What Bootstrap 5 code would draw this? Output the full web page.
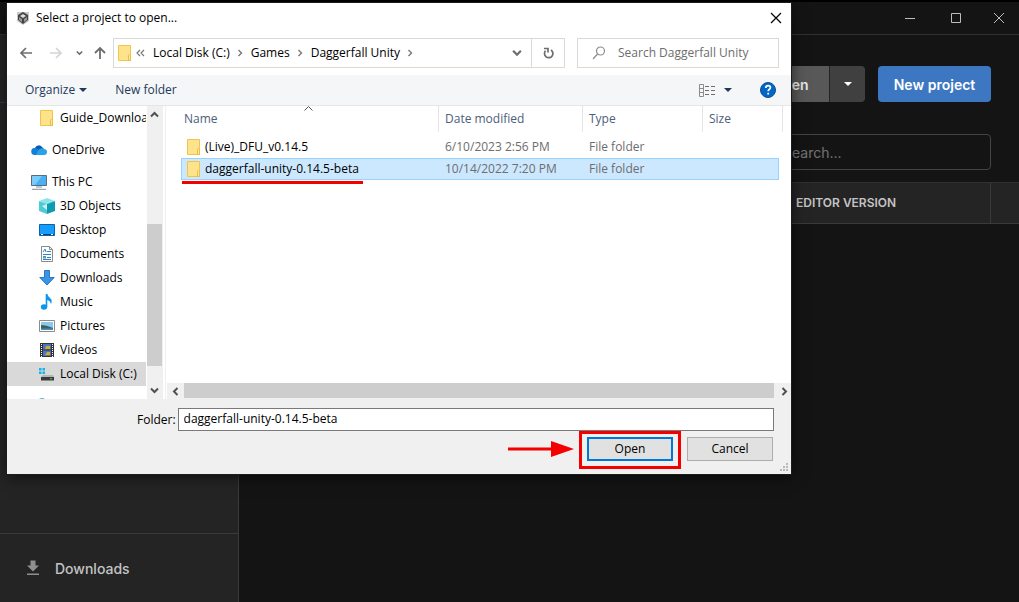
<!DOCTYPE html>
<html lang="en" data-bs-theme="light">
<head>
<meta charset="utf-8">
<meta name="viewport" content="width=device-width, initial-scale=1">
<title>Select a project to open...</title>
<link href="https://cdn.jsdelivr.net/npm/bootstrap@5.3.0/dist/css/bootstrap.min.css" rel="stylesheet">
<script src="https://cdn.jsdelivr.net/npm/bootstrap@5.3.0/dist/js/bootstrap.bundle.min.js"></script>
<style>
  body { background: #141414; font-family: Inter, sans-serif; overflow: hidden; }
  button { color: inherit; }
  svg { display: block; flex: none; }
  .ico-btn { border: 0; background: none; padding: 0; display: flex; align-items: center; justify-content: center; }

  /* Hub window behind the dialog */
  .hub { border-top: 2px solid #000; color: #c4c4c4; }
  .hub-title { height: 33px; border-bottom: 1px solid #303030; padding-left: 46px; }
  .hub-title .ico-btn { width: 46px; color: #bdbdbd; }
  .hub-title .ico-btn:last-child { width: 40px; }
  .hub-side { width: 239px; background: #242424; border-right: 1px solid #3a3a3a; }
  .hub-account { height: 68px; border-bottom: 1px solid #3a3a3a; }
  .hub-downloads { height: 69px; border-top: 1px solid #3a3a3a; padding-left: 25px; color: #c4c4c4; font-size: 14px; font-weight: 500; gap: 14px; }
  .hub-bar { padding: 31px 28px 0 28px; gap: 13px; }
  .hub-btn { height: 36px; font-size: 14px; font-weight: 600; border: 0; border-radius: 4px; padding: 0; color: #fff; }
  .hub-open { width: 77px; background: #585858; color: #e6e6e6; }
  .hub-more { width: 36px; background: #404040; display: flex; align-items: center; justify-content: center; }
  .hub-new { width: 113px; background: #3d77c2; }
  .hub-find { width: 240px; height: 36px; background: #141414; border: 1px solid #444; border-radius: 4px; color: #ccc; font-size: 14px; padding: 0 12px 0 31px; margin: 32px 28px 12px auto; font-family: Inter, sans-serif; }
  .hub-find::placeholder { color: #757575; opacity: 1; }
  .hub-head { height: 42px; background: #242424; border-top: 1px solid #303030; border-bottom: 1px solid #3a3a3a; font-size: 12px; font-weight: 600; }
  .hub-head .ver { width: 207px; padding-left: 12px; border-right: 1px solid #3a3a3a; }
  .hub-head .tail { width: 28px; }

  /* File dialog */
  .dlg { position: absolute; left: 7px; right: 228px; top: 3px; background: #fff; color: #000; font: 12px/16px "Open Sans", sans-serif; box-shadow: 0 0 0 1px #1c1c1c, 0 3px 14px rgba(0,0,0,.6); }
  .dlg-title { height: 30px; padding: 0 9px; gap: 6px; }
  .dlg-nav { padding: 5px 12px 7px 12px; }
  .dlg-nav .ico-btn { color: #6d6d6d; }
  .recent { margin: 0 11px 0 13px; }
  .addr { height: 30px; border: 1px solid #d9d9d9; margin-left: 7px; }
  .addr .reload { width: 33px; border-left: 1px solid #d9d9d9; }
  .addr .more { margin: 0 5px 0 6px; }
  .addr nav svg { margin: 0 8px 0 7px; }
  .find { width: 202px; height: 30px; border: 1px solid #d9d9d9; margin-left: 12px; padding: 0 12px 0 13px; gap: 11px; }
  .find input { border: 0; padding: 0; outline: 0; color: #6d6d6d; width: 100%; }
  .find input::placeholder { color: #6d6d6d; opacity: 1; }
  .crumb-link { color: #000; text-decoration: none; }
  .cmd { height: 31px; background: #f5f6f7; border-bottom: 1px solid #e5e6e7; color: #1e395b; padding: 0 15px 0 18px; }
  .cmd button { font-size: 12px; gap: 4px; }
  .pane { height: 293px; }
  .tree { width: 140px; overflow: hidden; }
  .tree a { height: 24px; color: #000; text-decoration: none; white-space: nowrap; display: flex; align-items: center; gap: 5px; padding-left: 24px; margin-right: 1px; overflow: hidden; }
  .tree a.sub { padding-left: 32px; }
  .tree a.root { margin-top: 8px; }
  .tree a.first-root { margin-bottom: 8px; }
  .tree a.on { background: #d9d9d9; }
  .sbar-v { width: 16px; background: #f0f0f0; }
  .sbar-v .ico-btn { height: 17px; width: 15px; color: #505050; }
  .sbar-v .thumb { height: 142px; width: 15px; background: #cdcdcd; }
  .files { border-left: 1px solid #f0f0f0; margin-left: 2px; }
  .sbar-h { height: 16px; background: #f0f0f0; margin-left: 1px; }
  .sbar-h .ico-btn { width: 17px; color: #505050; }
  .sbar-h .thumb { height: 15px; background: #cdcdcd; }
  .ftable { width: calc(100% - 27px); margin-left: 15px; table-layout: fixed; border-collapse: separate; border-spacing: 0; }
  .ftable th { height: 26px; font-weight: 400; color: #4c607a; border-right: 1px solid #e5e5e5; padding: 0 0 0 6px; position: relative; }
  .ftable th:first-child { padding-left: 3px; }
  .ftable th:last-child { border: 0; }
  .ftable th:last-child::after { content: ""; position: absolute; right: -4px; top: 0; bottom: 0; border-right: 1px solid #e5e5e5; }
  .ftable tbody td { height: 22px; padding: 0 0 0 6px; color: #6d6d6d; white-space: nowrap; }
  .ftable td:first-child { color: #000; }
  .ftable tr.gap td { height: 4px; }
  .ftable tr.on { background: #cce8ff; outline: 1px solid #99d1ff; outline-offset: -1px; }
  .fname { display: flex; gap: 4px; align-items: center; position: relative; }
  .sort { position: absolute; left: 123px; top: 0; }
  .underline { position: absolute; left: -5px; top: 20px; width: 181px; height: 3px; background: #f40000; }
  .foot { background: #f0f0f0; padding: 9px 17px 13px 130px; }
  .foot label { margin-right: 2px; }
  .foot input { height: 23px; border: 1px solid #7a7a7a; padding: 0 5px 2px; background: #fff; color: #000; outline: 0; }
  .foot .acts { gap: 14px; margin-top: 6px; padding-right: 1px; }
  .act { width: 86px; height: 24px; background: #e1e1e1; border: 1px solid #adadad; padding: 0; line-height: 20px; }
  .act.def { border: 2px solid #0078d7; }
  .hot { position: absolute; inset: -6px -8px -8px -8px; border: 3px solid #f40000; pointer-events: none; }
  .arrow { position: absolute; right: 99px; top: 3px; }
  .grip { position: absolute; right: 2px; bottom: 2px; }
</style>
</head>
<body>
<svg width="0" height="0" class="position-absolute" aria-hidden="true">
  <defs>
    <symbol id="folder" viewBox="0 0 16 16"><path d="M1.500.5h12v15h-12z" fill="#ffe38c" stroke="#efc648"/><path d="M11.500 10.500q0-1 1-1t1 1v5h-2z" fill="#ffe9a8" stroke="#e8bd3d"/></symbol>
    <symbol id="down" viewBox="0 0 9 7"><path d="M1 1.500l3.500 3.500L8 1.500" fill="none" stroke="currentColor" stroke-width="2"/></symbol>
    <symbol id="crumb" viewBox="0 0 5 8"><path d="M1 1l3 3-3 3" fill="none" stroke="#777" stroke-width="1.400"/></symbol>
    <symbol id="tri" viewBox="0 0 8 4"><path d="M0 0h8L4 4z" fill="currentColor"/></symbol>
  </defs>
</svg>

<div class="hub vh-100 d-flex flex-column">
  <header class="hub-title d-flex justify-content-end flex-shrink-0">
    <button class="ico-btn" aria-label="Minimize"><svg width="10" height="10"><path d="M0 5.500h10" stroke="currentColor"/></svg></button>
    <button class="ico-btn" aria-label="Maximize"><svg width="10" height="10"><path d="M.5.5h9v9h-9z" fill="none" stroke="currentColor"/></svg></button>
    <button class="ico-btn" aria-label="Close window"><svg width="10" height="10"><path d="M0 0l10 10M10 0L0 10" stroke="currentColor"/></svg></button>
  </header>
  <div class="d-flex flex-grow-1">
    <aside class="hub-side d-flex flex-column flex-shrink-0">
      <div class="hub-account"></div>
      <a href="#" class="hub-downloads mt-auto d-flex align-items-center text-decoration-none">
        <svg width="16" height="16" viewBox="0 0 16 16" fill="#8f8f8f"><path d="M5.500.5h5v5H14L8 11.500 2 5.500h3.500zM2 13.500h12v1.500H2z"/></svg>
        Downloads
      </a>
    </aside>
    <main class="flex-grow-1 d-flex flex-column">
      <div class="hub-bar d-flex justify-content-end">
        <div class="btn-group">
          <button class="hub-btn hub-open rounded-end-0">Open</button>
          <button class="hub-btn hub-more rounded-start-0 border-start border-dark" aria-label="More open options"><svg width="8" height="4"><use href="#tri"/></svg></button>
        </div>
        <button class="hub-btn hub-new">New project</button>
      </div>
      <input class="hub-find" type="text" placeholder="Search..." aria-label="Search projects">
      <div class="hub-head d-flex justify-content-end">
        <div class="ver d-flex align-items-center">EDITOR VERSION</div><div class="tail"></div>
      </div>
    </main>
  </div>
</div>

<section class="dlg" role="dialog" aria-label="Select a project to open...">
  <div class="dlg-title d-flex align-items-center">
    <svg width="14" height="14" viewBox="0 0 14 14"><path d="M1 1h12v9l-6 4-6-4z" fill="#c9c9c9"/><path d="M7 1l5 3v5l-5 4-5-4V4z" fill="#444"/><path d="M7 3l3 2-3 2-3-2z" fill="#ddd"/><path d="M3 6l3 2v3L3 9zM11 6L8 8v3l3-2z" fill="#999"/></svg>
    <span class="me-auto">Select a project to open...</span>
    <button class="ico-btn" aria-label="Close"><svg width="12" height="12" viewBox="0 0 12 12"><path d="M1 1l10 10M11 1L1 11" stroke="#000" stroke-width="1.200"/></svg></button>
  </div>

  <div class="dlg-nav d-flex align-items-center">
    <button class="ico-btn" aria-label="Back"><svg width="14" height="12" viewBox="0 0 14 12" fill="none" stroke="currentColor" stroke-width="1.700"><path d="M13 6H2M7 1L2 6l5 5"/></svg></button>
    <button class="ico-btn ms-3" aria-label="Forward"><svg width="14" height="12" viewBox="0 0 14 12" fill="none" stroke="#d4d4d4" stroke-width="1.700"><path d="M1 6h11M7 1l5 5-5 5"/></svg></button>
    <button class="ico-btn recent" aria-label="Recent locations"><svg width="7" height="6"><use href="#down"/></svg></button>
    <button class="ico-btn" aria-label="Up"><svg width="12" height="14" viewBox="0 0 12 14" fill="none" stroke="currentColor" stroke-width="1.800"><path d="M6 13V2M1 7l5-5 5 5"/></svg></button>
    <div class="addr d-flex flex-grow-1 align-items-center ps-1">
      <svg width="14" height="16" viewBox="1 0 14 16"><use href="#folder" width="16" height="16"/></svg>
      <svg class="ms-1 me-2" width="9" height="8" viewBox="0 0 9 8" fill="none" stroke="#777" stroke-width="1.200"><path d="M4 1L1 4l3 3M8 1L5 4l3 3"/></svg>
      <nav class="d-flex align-items-center" aria-label="Location">
        <a href="#" class="crumb-link">Local Disk (C:)</a><svg width="6" height="8"><use href="#crumb"/></svg>
        <a href="#" class="crumb-link">Games</a><svg width="6" height="8"><use href="#crumb"/></svg>
        <a href="#" class="crumb-link">Daggerfall Unity</a><svg width="6" height="8"><use href="#crumb"/></svg>
      </nav>
      <button class="ico-btn more ms-auto pe-1" aria-label="Previous locations"><svg width="10" height="8"><use href="#down"/></svg></button>
      <button class="ico-btn reload align-self-stretch" aria-label="Refresh"><svg width="11" height="12" viewBox="0 0 11 12" fill="none" stroke="currentColor" stroke-width="1.700"><path d="M8 3a4.200 4.200 0 1 1-5.500.8"/><path d="M1 1.500h4v4"/></svg></button>
    </div>
    <label class="find d-flex align-items-center">
      <svg width="16" height="14" viewBox="0 0 16 14" fill="none" stroke="#8c8c8c" stroke-width="1.200"><circle cx="9.500" cy="5" r="4"/><path d="M6.500 8L2 13"/></svg>
      <input type="text" placeholder="Search Daggerfall Unity" aria-label="Search Daggerfall Unity">
    </label>
  </div>

  <div class="cmd d-flex align-items-center">
    <button class="ico-btn">Organize <svg width="8" height="4"><use href="#tri"/></svg></button>
    <button class="ico-btn ms-4 ps-1 me-auto">New folder</button>
    <button class="ico-btn" aria-label="Change your view"><svg width="17" height="13" viewBox="0 0 17 13" fill="none" stroke="#8c8c8c"><path d="M.5.5h4v12h-4zM.5 4.500h4M.5 8.500h4"/><path d="M6 2.500h4M12 2.500h4M6 6.500h4M12 6.500h4M6 10.500h4M12 10.500h4" stroke="#6f6f6f"/></svg></button>
    <button class="ico-btn ms-2" aria-label="More view options"><svg width="8" height="4"><use href="#tri"/></svg></button>
    <button class="ico-btn ms-4 ps-1" aria-label="Help"><svg width="16" height="16" viewBox="0 0 16 16"><circle cx="8" cy="8" r="7.500" fill="#0067c5" stroke="#0a4e96"/><path d="M5.700 6q.2-2.300 2.400-2.300 2.300 0 2.300 2 0 1-1.200 1.800-1 .7-1 1.800" fill="none" stroke="#fff" stroke-width="1.700"/><path d="M7.300 10.800h1.800v1.700H7.300z" fill="#fff"/></svg></button>
  </div>

  <div class="pane d-flex">
    <nav class="tree flex-shrink-0" aria-label="Folders">
      <a href="#" class="sub"><svg width="16" height="16"><use href="#folder"/></svg>Guide_Downloads</a>
      <a href="#" class="root first-root"><svg width="16" height="16" viewBox="0 0 16 16"><path d="M4 6a4 4 0 0 1 7-1l2 2-5 4-6-2z" fill="#0a5ab8"/><path d="M4 13a3.500 3.500 0 0 1-.5-7Q6 5.500 8 8l4 5z" fill="#1180d8"/><path d="M7 8.500Q10 5 13 7a3 3 0 0 1 0 6H5z" fill="#28a0ea"/></svg>OneDrive</a>
      <a href="#"><svg width="16" height="16" viewBox="0 0 16 16"><path d="M.5 1.500h15v10H.5z" fill="#46b1f5" stroke="#5c6b78"/><path d="M1 2h10L4 11H1z" fill="#7accfb"/><path d="M5 13h6M1 15.300h14" stroke="#84919c"/></svg>This PC</a>
      <a href="#" class="sub"><svg width="16" height="16" viewBox="0 0 16 16"><path d="M8 0l8 3-8 3-8-3z" fill="#8ee4ea"/><path d="M0 3l8 3v10l-8-3z" fill="#4fc9d6"/><path d="M16 3L8 6v10l8-3z" fill="#0e9cb2"/><path d="M3 8l5-2v6z" fill="#c8f4f6"/></svg>3D Objects</a>
      <a href="#" class="sub"><svg width="16" height="16" viewBox="0 0 16 16"><path d="M.5 2.500h15v11H.5z" fill="#169dfb" stroke="#0a62a8"/><path d="M1 12.500h14" stroke="#053f70"/><path d="M2 12.500h2M12 12.500h2" stroke="#fff"/></svg>Desktop</a>
      <a href="#" class="sub"><svg width="16" height="16" viewBox="0 0 16 16"><path d="M2.500.5h8l3 3v12h-11z" fill="#fff" stroke="#8a8a8a"/><path d="M10.500.5v3h3" fill="none" stroke="#8a8a8a"/><path d="M4 6l2-3 1 3M8 5.500h4M4 8.500h8M8 11.500h4M4 13.500h8" stroke="#2a86c8" fill="none"/><path d="M4 10h3v2.500H4z" fill="#59b"/></svg>Documents</a>
      <a href="#" class="sub"><svg width="16" height="16" viewBox="0 0 16 16"><path d="M5.500.5h5v7h4.700L8 15 .8 7.500h4.700z" fill="#3a96e4" stroke="#2678c2"/></svg>Downloads</a>
      <a href="#" class="sub"><svg width="16" height="16" viewBox="0 0 16 16"><ellipse cx="5" cy="13" rx="3.200" ry="2.700" fill="#0e95f0"/><path d="M6.700 0h1.700q.4 2.500 2.600 4 3 2.500.8 6.500.3-3.500-3.500-4.500v7H6.700z" fill="#0e95f0"/></svg>Music</a>
      <a href="#" class="sub"><svg width="16" height="16" viewBox="0 0 16 16"><path d="M.5 2.500h15v11H.5z" fill="#fff" stroke="#8c8c8c"/><path d="M2 4h12v8H2z" fill="#8fc6ee"/><path d="M2 7q5 0 12 3v2H2z" fill="#38655a"/><path d="M2 10.500h12V12H2z" fill="#4f91bd"/></svg>Pictures</a>
      <a href="#" class="sub"><svg width="16" height="16" viewBox="0 0 16 16"><path d="M1 1h14v14H1z" fill="#333"/><path d="M4 2h8v5.500H4zM4 8.500h8V14H4z" fill="#4677c4"/><path d="M7 4h4v3H6zM8 10h3v3H6z" fill="#d5a72b"/><path d="M2.500 2v13M13.500 2v13" stroke="#fff" stroke-dasharray="1 1"/></svg>Videos</a>
      <a href="#" class="sub on"><svg width="16" height="16" viewBox="0 0 16 16"><path d="M0 2h2.500v2.500H0zM3.500 2H6v2.500H3.500zM0 5.500h2.500V8H0zM3.500 5.500H6V8H3.500z" fill="#12b5ec"/><path d="M4 9h10l1 2H2z" fill="#b5b5b5"/><path d="M2 11h13v3.500H2z" fill="#3c3c3c"/><path d="M11 12.200h2v1h-2z" fill="#3de04a"/></svg>Local Disk (C:)</a>
      <a href="#" class="sub root" aria-label="Network"><svg width="16" height="16" viewBox="0 0 16 16"><circle cx="3" cy="4" r="4" fill="#5fb1d0"/></svg></a>
    </nav>
    <div class="sbar-v d-flex flex-column flex-shrink-0">
      <button class="ico-btn" aria-label="Scroll up"><svg width="9" height="7" viewBox="0 0 9 7"><path d="M1 5.500L4.500 2 8 5.500" fill="none" stroke="currentColor" stroke-width="2"/></svg></button>
      <div class="thumb mt-auto"></div>
      <button class="ico-btn mt-3" aria-label="Scroll down"><svg width="9" height="7"><use href="#down"/></svg></button>
    </div>
    <div class="files flex-grow-1 d-flex flex-column">
      <table class="ftable">
        <colgroup><col style="width:258px"><col style="width:144px"><col style="width:120px"><col></colgroup>
        <thead><tr>
          <th scope="col">Name<svg class="sort" width="9" height="5" viewBox="0 0 9 5"><path d="M.5 4.500l4-4 4 4" fill="none" stroke="#555"/></svg></th>
          <th scope="col">Date modified</th><th scope="col">Type</th><th scope="col">Size</th>
        </tr></thead>
        <tbody>
          <tr class="gap"><td colspan="4"></td></tr>
          <tr><td><div class="fname"><svg width="14" height="16" viewBox="1 0 14 16"><use href="#folder" width="16" height="16"/></svg>(Live)_DFU_v0.14.5</div></td><td>6/10/2023 2:56 PM</td><td>File folder</td><td></td></tr>
          <tr class="on"><td><div class="fname"><svg width="14" height="16" viewBox="1 0 14 16"><use href="#folder" width="16" height="16"/></svg>daggerfall-unity-0.14.5-beta<span class="underline"></span></div></td><td>10/14/2022 7:20 PM</td><td>File folder</td><td></td></tr>
        </tbody>
      </table>
      <div class="sbar-h d-flex mt-auto">
        <button class="ico-btn" aria-label="Scroll left"><svg width="7" height="9" viewBox="0 0 7 9"><path d="M5.500 1L2 4.500 5.500 8" fill="none" stroke="currentColor" stroke-width="2"/></svg></button>
        <div class="thumb flex-grow-1"></div>
        <button class="ico-btn ps-1" aria-label="Scroll right"><svg width="7" height="9" viewBox="0 0 7 9"><path d="M1.500 1L5 4.500 1.500 8" fill="none" stroke="currentColor" stroke-width="2"/></svg></button>
      </div>
    </div>
  </div>

  <div class="foot">
    <div class="d-flex align-items-center">
      <label for="folderName">Folder:</label>
      <input id="folderName" type="text" class="flex-grow-1" value="daggerfall-unity-0.14.5-beta">
    </div>
    <div class="acts d-flex justify-content-end">
      <div class="position-relative">
        <button class="act def">Open</button>
        <span class="hot"></span>
        <svg class="arrow" width="66" height="18" viewBox="0 0 66 18" fill="#f40000"><path d="M0 7.500h43V1l23 8-23 8v-6.500H0z"/></svg>
      </div>
      <button class="act">Cancel</button>
    </div>
    <svg class="grip" width="9" height="9" viewBox="0 0 9 9" fill="#b8b8b8"><path d="M6 0h2v2H6zM3 3h2v2H3zM6 3h2v2H6zM0 6h2v2H0zM3 6h2v2H3zM6 6h2v2H6z"/></svg>
  </div>
</section>
</body>
</html>
